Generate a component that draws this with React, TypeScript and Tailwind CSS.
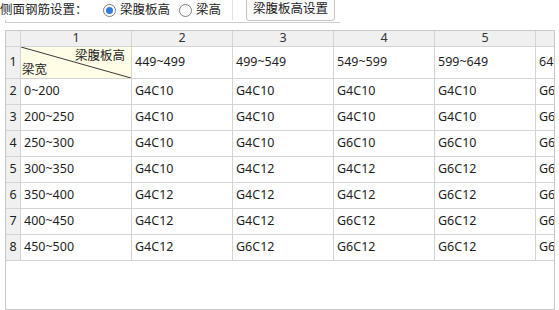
import React from 'react'

const font = { fontFamily: '"Noto Sans", "Noto Sans CJK SC", sans-serif' }

const headRow = ['449~499', '499~549', '549~599', '599~649', '649~699']

const rows = [
  ['0~200', 'G4C10', 'G4C10', 'G4C10', 'G4C10', 'G6C10'],
  ['200~250', 'G4C10', 'G4C10', 'G4C10', 'G4C10', 'G6C10'],
  ['250~300', 'G4C10', 'G4C10', 'G6C10', 'G6C10', 'G6C10'],
  ['300~350', 'G4C10', 'G4C12', 'G4C12', 'G6C12', 'G6C12'],
  ['350~400', 'G4C12', 'G4C12', 'G4C12', 'G6C12', 'G6C12'],
  ['400~450', 'G4C12', 'G4C12', 'G6C12', 'G6C12', 'G6C12'],
  ['450~500', 'G4C12', 'G6C12', 'G6C12', 'G6C12', 'G6C12'],
]

function Radio({ checked, label }: { checked?: boolean; label: string }) {
  return (
    <label className="flex items-center gap-[4px]">
      <span className="w-[13px] h-[13px] rounded-full border border-[#7d7d7d] bg-white flex items-center justify-center">
        {checked && <span className="w-[7px] h-[7px] rounded-full bg-[#2f7de1]" />}
      </span>
      <span>{label}</span>
    </label>
  )
}

const cols = 'grid grid-cols-[15px_111px_101px_101px_101px_101px_101px]'

export default function App() {
  return (
    <div
      style={font}
      className="w-[559px] h-[310px] overflow-hidden bg-white text-[12.5px] text-[#1e1e1e] flex flex-col"
    >
      {/* toolbar */}
      <div className="h-[20px] flex items-center shrink-0">
        <span className="w-[103px]">侧面钢筋设置：</span>
        <Radio checked label="梁腹板高" />
        <div className="w-[9px]" />
        <Radio label="梁高" />
        <div className="ml-[11px] w-px h-[20px] bg-[#e2e2e2]" />
        <button className="ml-[13px] self-end -mb-px h-[24px] w-[89px] rounded-[3px] border border-[#c4c4c4] bg-[#fbfbfb] text-[#1e1e1e] flex items-center justify-center">
          梁腹板高设置
        </button>
      </div>
      <div className="ml-[5px] w-[335px] h-[3px] border-l border-b border-[#cfcfcf] shrink-0" />

      {/* grid */}
      <div className="mt-[7px] ml-[5px] w-[550px] flex-1 border border-[#c9c9c9] overflow-hidden">
        <div className={`${cols} h-[16px] bg-[#f0f0f0]`}>
          <div className="border-r border-b border-[#d4d4d4]" />
          {[1, 2, 3, 4, 5, 6].map(n => (
            <div
              key={n}
              className="border-r border-b border-[#d4d4d4] flex items-center justify-center leading-none text-[#333]"
            >
              {n}
            </div>
          ))}
        </div>

        <div className={`${cols} h-[32px]`}>
          <div className="bg-[#f0f0f0] border-r border-b border-[#d4d4d4] flex items-center justify-center">1</div>
          <div className="relative bg-[#fffde6] border-r border-b border-[#d4d4d4] overflow-hidden">
            <svg className="absolute inset-0" width="110" height="31">
              <line x1="0" y1="0" x2="110" y2="31" stroke="#3a3a3a" strokeWidth="1" />
            </svg>
            <span className="absolute right-[6px] top-[1px] leading-[16px]">梁腹板高</span>
            <span className="absolute left-[1px] bottom-[0px] leading-[16px]">梁宽</span>
          </div>
          {headRow.map(v => (
            <div
              key={v}
              className="border-r border-b border-[#d4d4d4] flex items-center pl-[3px] whitespace-nowrap overflow-hidden"
            >
              {v}
            </div>
          ))}
        </div>

        {rows.map((r, i) => (
          <div key={i} className={`${cols} h-[26px]`}>
            <div className="bg-[#f0f0f0] border-r border-b border-[#d4d4d4] flex items-center justify-center">
              {i + 2}
            </div>
            {r.map((v, j) => (
              <div
                key={j}
                className="border-r border-b border-[#d4d4d4] flex items-center pl-[3px] whitespace-nowrap overflow-hidden"
              >
                {v}
              </div>
            ))}
          </div>
        ))}
      </div>
    </div>
  )
}
